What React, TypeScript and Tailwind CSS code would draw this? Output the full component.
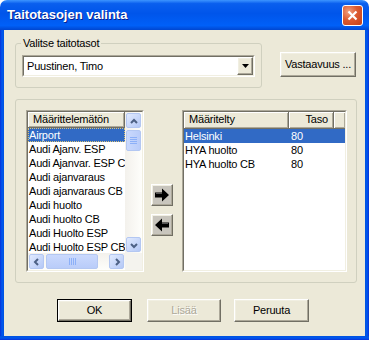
import React from "react";

const leftItems = [
  "Airport",
  "Audi Ajanv. ESP",
  "Audi Ajanvar. ESP CB",
  "Audi ajanvaraus",
  "Audi ajanvaraus CB",
  "Audi huolto",
  "Audi huolto CB",
  "Audi Huolto ESP",
  "Audi Huolto ESP CB",
];

const rightItems = [
  { name: "Helsinki", level: "80" },
  { name: "HYA huolto", level: "80" },
  { name: "HYA huolto CB", level: "80" },
];

const raised =
  "border border-t-white border-l-white border-r-[#716F64] border-b-[#716F64] shadow-[inset_-1px_-1px_#ACA899,inset_1px_1px_#F1EFE2]";
const sunken =
  "border border-t-[#ACA899] border-l-[#ACA899] border-r-white border-b-white";
const sunkenInner =
  "border border-t-[#716F64] border-l-[#716F64] border-r-[#F1EFE2] border-b-[#F1EFE2]";
const header =
  "h-[17px] bg-[#ECE9D8] border-r border-b border-r-[#716F64] border-b-[#716F64] shadow-[inset_1px_1px_white,inset_-1px_-1px_#ACA899] leading-[15px] text-[11px] text-black";

const Chevron = ({ dir }: { dir: "up" | "down" | "left" | "right" }) => {
  const d = {
    up: "M1 6 L4 3 L7 6",
    down: "M1 3 L4 6 L7 3",
    left: "M5 1 L2 4 L5 7",
    right: "M3 1 L6 4 L3 7",
  }[dir];
  return (
    <svg width="8" height="8" viewBox="0 0 8 8">
      <path d={d} fill="none" stroke="#4D6185" strokeWidth="2" />
    </svg>
  );
};

const SbButton = ({ dir }: { dir: "up" | "down" | "left" | "right" }) => (
  <div className="h-[17px] w-[17px] shrink-0 p-px">
    <div className="flex h-full w-full items-center justify-center rounded-[2px] border border-[#B3C7F2] bg-gradient-to-br from-[#E1EAFE] to-[#B4C8F6]">
      <Chevron dir={dir} />
    </div>
  </div>
);

const Grip = ({ vertical }: { vertical?: boolean }) => (
  <div className={`flex ${vertical ? "flex-col" : ""} gap-px`}>
    {[0, 1, 2, 3].map((i) => (
      <div
        key={i}
        className={vertical ? "h-px w-[7px] bg-[#8CB0F8]" : "h-[7px] w-px bg-[#8CB0F8]"}
      />
    ))}
  </div>
);

// fat arrow used on the move buttons
const TransferArrow = ({ left }: { left?: boolean }) => (
  <svg width="16" height="14" viewBox="0 0 16 14" className={left ? "-scale-x-100" : ""}>
    <path d="M1 4.5 H8 V0.5 L15 7 L8 13.5 V9.5 H1 Z" fill="black" />
    <path d="M2 5.5 H8" stroke="#555" strokeWidth="1" />
  </svg>
);

export default function App() {
  return (
    <div className="flex h-[340px] w-[369px] flex-col bg-white font-['Liberation_Sans',Arial,sans-serif] text-[11px] tracking-[-0.2px] text-black">
      {/* Title bar */}
      <div className="flex h-[30px] shrink-0 items-center rounded-t-[7px] bg-[linear-gradient(180deg,#3D95FF_0%,#0A5FEE_12%,#0055EA_45%,#0060F8_85%,#0046D0_100%)] pl-[7px]">
        <span className="text-[13px] font-bold tracking-normal text-white [text-shadow:1px_1px_#0A1F8C]">
          Taitotasojen valinta
        </span>
        <div className="ml-auto mr-[6px] flex h-[21px] w-[21px] items-center justify-center rounded-[3px] border border-white bg-[radial-gradient(circle_at_30%_30%,#F0A080_0%,#DC5A30_45%,#C23F17_100%)]">
          <svg width="11" height="11" viewBox="0 0 11 11">
            <path d="M1.5 1.5 L9.5 9.5 M9.5 1.5 L1.5 9.5" stroke="white" strokeWidth="2.2" />
          </svg>
        </div>
      </div>

      <div className="flex flex-1">
        <div className="w-[4px] bg-[linear-gradient(90deg,#0831D9,#0058EE_50%,#0052E0)]" />

        {/* Client area */}
        <div className="flex flex-1 flex-col bg-[#ECE9D8]">
          {/* Row 1 */}
          <div className="mt-[6px] flex items-start">
            <fieldset className="ml-[11px] h-[52px] w-[247px] rounded-[3px] border border-[#D0D0BF]">
              <legend className="ml-[5px] px-[2px] text-[11px] leading-[14px]">Valitse taitotasot</legend>
              <div className={`ml-[6px] mt-[5px] h-[22px] w-[233px] ${sunken}`}>
                <div className={`flex h-full w-full items-center bg-white ${sunkenInner}`}>
                  <span className="flex-1 pl-[3px] leading-[14px]">Puustinen, Timo</span>
                  <div className={`flex h-[18px] w-[16px] items-center justify-center bg-[#ECE9D8] ${raised}`}>
                    <svg width="7" height="4" viewBox="0 0 7 4">
                      <path d="M0 0 H7 L3.5 4 Z" fill="black" />
                    </svg>
                  </div>
                </div>
              </div>
            </fieldset>
            <button className={`ml-[18px] mt-[16px] h-[25px] w-[76px] bg-[#ECE9D8] text-[11px] ${raised}`}>
              Vastaavuus ...
            </button>
          </div>

          {/* Row 2 */}
          <div className="ml-[11px] mt-[11px] flex h-[184px] w-[342px] items-start rounded-[3px] border border-[#D0D0BF] pl-[10px] pt-[10px]">
            {/* Left list */}
            <div className={`h-[162px] w-[118px] ${sunken}`}>
              <div className={`flex h-full w-full flex-col bg-white ${sunkenInner}`}>
                <div className="flex h-[141px]">
                  <div className="flex w-[97px] flex-col overflow-hidden">
                    <div className={`${header} pl-[5px]`}>Määrittelemätön</div>
                    {leftItems.map((item, i) => (
                      <div
                        key={item}
                        className={`h-[14px] shrink-0 whitespace-nowrap pl-[1px] leading-[14px] ${
                          i === 0
                            ? "bg-[#316AC5] text-white outline-1 outline-dotted -outline-offset-1 outline-[#D8C27A]"
                            : ""
                        }`}
                      >
                        {item}
                      </div>
                    ))}
                  </div>
                  <div className="flex w-[17px] flex-col bg-[linear-gradient(90deg,#F3F1EC,#FEFEFB)]">
                    <SbButton dir="up" />
                    <div className="h-[23px] w-[17px] p-px">
                      <div className="flex h-full w-full items-center justify-center rounded-[2px] border border-[#B3C7F2] bg-gradient-to-r from-[#CAD9FD] to-[#B9CCF9]">
                        <Grip vertical />
                      </div>
                    </div>
                    <div className="flex-1" />
                    <SbButton dir="down" />
                  </div>
                </div>
                <div className="flex h-[17px]">
                  <div className="flex w-[97px] bg-[linear-gradient(180deg,#F3F1EC,#FEFEFB)]">
                    <SbButton dir="left" />
                    <div className="h-[17px] w-[54px] p-px">
                      <div className="flex h-full w-full items-center justify-center rounded-[2px] border border-[#B3C7F2] bg-gradient-to-b from-[#CAD9FD] to-[#B9CCF9]">
                        <Grip />
                      </div>
                    </div>
                    <div className="flex-1" />
                    <SbButton dir="right" />
                  </div>
                  <div className="w-[17px] bg-[#F4F3EE]" />
                </div>
              </div>
            </div>

            {/* Transfer buttons */}
            <div className="ml-[7px] mt-[74px] flex flex-col gap-[8px]">
              <div className={`flex h-[22px] w-[22px] items-center justify-center bg-[#C8C5BD] ${raised}`}>
                <TransferArrow />
              </div>
              <div className={`flex h-[22px] w-[22px] items-center justify-center bg-[#C8C5BD] ${raised}`}>
                <TransferArrow left />
              </div>
            </div>

            {/* Right list */}
            <div className={`ml-[9px] h-[162px] w-[165px] ${sunken}`}>
              <div className={`flex h-full w-full flex-col bg-white ${sunkenInner}`}>
                <div className="flex">
                  <div className={`${header} w-[105px] pl-[5px]`}>Määritelty</div>
                  <div className={`${header} w-[45px] pr-[5px] text-right`}>Taso</div>
                  <div className={`${header} flex-1 border-r-0`} />
                </div>
                {rightItems.map((row, i) => (
                  <div
                    key={row.name}
                    className={`flex h-[14px] leading-[14px] ${i === 0 ? "bg-[#316AC5] text-white" : ""}`}
                  >
                    <span className="w-[105px] pl-[1px]">{row.name}</span>
                    <span className="pl-[2px]">{row.level}</span>
                  </div>
                ))}
              </div>
            </div>
          </div>

          {/* Row 3 */}
          <div className="mt-[16px] flex">
            <button className="ml-[53px] h-[23px] w-[75px] border border-black">
              <div className={`flex h-full w-full items-center justify-center bg-[#ECE9D8] ${raised}`}>OK</div>
            </button>
            <button className={`ml-[15px] h-[23px] w-[74px] bg-[#ECE9D8] text-[#ACA899] [text-shadow:1px_1px_white] ${raised}`}>
              Lisää
            </button>
            <button className={`ml-[13px] h-[23px] w-[75px] bg-[#ECE9D8] ${raised}`}>Peruuta</button>
          </div>
        </div>

        <div className="w-[4px] bg-[linear-gradient(90deg,#0052E0,#0058EE_50%,#0831D9)]" />
      </div>
      <div className="h-[4px] bg-[linear-gradient(180deg,#0052E0,#0058EE_50%,#0831D9)]" />
    </div>
  );
}
